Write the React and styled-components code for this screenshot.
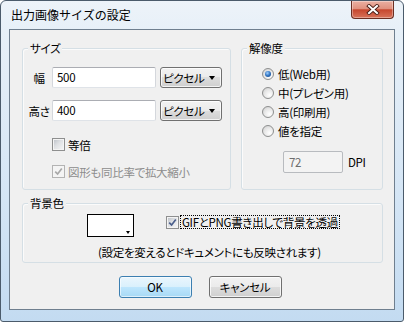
import React from "react";
import styled, { createGlobalStyle } from "styled-components";

const GlobalStyle = createGlobalStyle`
  html, body { margin: 0; padding: 0; background: #ffffff; }
  body {
    font-family: "Noto Sans CJK JP", "Noto Sans", sans-serif;
    font-size: 11.5px;
    letter-spacing: -0.3px;
    color: #000;
    font-feature-settings: "palt";
  }
  * { box-sizing: border-box; }
`;

const Window = styled.div`
  width: 404px;
  height: 322px;
  display: flex;
  flex-direction: column;
  border: 1px solid #4b5b6b;
  border-radius: 6px 6px 3px 3px;
  background: linear-gradient(180deg, #edf3f9 0px, #e7f0f8 30px, #d4e5f5 200px, #c3dbf1 322px);
  overflow: hidden;
`;

const TitleBar = styled.div`
  height: 28px;
  flex: none;
  display: flex;
  align-items: flex-start;
  justify-content: space-between;
`;

const Title = styled.div`
  padding: 7px 0 0 10px;
  font-size: 12px;
  letter-spacing: 0;
  line-height: 14px;
  font-feature-settings: normal;
`;

const CloseButton = styled.div`
  width: 43px;
  height: 18px;
  margin-right: 9px;
  border: 1px solid #6b2e22;
  border-top: none;
  border-radius: 0 0 4px 4px;
  background: linear-gradient(180deg, #ebb0a2 0%, #e0917f 45%, #c6472e 52%, #d8735a 100%);
  box-shadow: inset 0 0 0 1px rgba(255, 255, 255, 0.35);
  display: flex;
  align-items: center;
  justify-content: center;
`;

const Client = styled.div`
  flex: none;
  margin: 0 8px;
  height: 281px;
  border: 1px solid #6f7f8f;
  background: #f0f0f0;
  padding: 18px 11px 0 12px;
  display: flex;
  flex-direction: column;
`;

const TopRow = styled.div`
  display: grid;
  grid-template-columns: 209px 142px;
  column-gap: 10px;
  height: 142px;
`;

const Group = styled.div`
  position: relative;
  border: 1px solid #d5dfe5;
  border-radius: 3px;
  box-shadow: inset 1px 1px 0 #fbfbfb;
  padding: ${(p) => p.$pad};
  height: ${(p) => p.$h || "auto"};
  margin-top: ${(p) => p.$mt || "0"};
`;

const Legend = styled.span`
  position: absolute;
  top: -8px;
  left: 5px;
  padding: 0 2px;
  line-height: 14px;
  background: #f0f0f0;
`;

const FieldRow = styled.div`
  display: flex;
  align-items: center;
  height: 21px;
  & + & { margin-top: 12px; }
`;

const FieldLabel = styled.span`
  width: 26px;
  text-align: center;
  line-height: 14px;
`;

const TextBox = styled.div`
  width: 104px;
  height: 21px;
  margin-right: 4px;
  border: 1px solid;
  border-color: #abadb3 #d4d7dc #dfe3e8 #d4d7dc;
  border-radius: 2px;
  background: #fff;
  padding: 2px 0 0 4px;
  line-height: 14px;
`;

const Select = styled.div`
  width: 62px;
  height: 21px;
  border: 1px solid #707070;
  border-radius: 3px;
  background: linear-gradient(180deg, #f2f2f2 0%, #ebebeb 50%, #dddddd 50%, #cfcfcf 100%);
  box-shadow: inset 0 0 0 1px rgba(255, 255, 255, 0.75);
  display: flex;
  align-items: center;
  justify-content: space-between;
  padding: 0 6px 0 2px;
  line-height: 14px;
`;

const Arrow = styled.span`
  width: 0;
  height: 0;
  border-left: 3.5px solid transparent;
  border-right: 3.5px solid transparent;
  border-top: 4px solid #000;
`;

const CheckList = styled.div`
  display: flex;
  flex-direction: column;
  gap: 14px;
  margin-top: 17px;
  padding-left: 26px;
`;

const CheckRow = styled.div`
  display: flex;
  align-items: center;
  gap: 3px;
  height: 13px;
  line-height: 14px;
  color: ${(p) => (p.$disabled ? "#8d8d8d" : "#000")};
`;

const Box = styled.span`
  position: relative;
  flex: none;
  width: 13px;
  height: 13px;
  border: 1px solid ${(p) => (p.$disabled ? "#b3b3b3" : "#8e8f8f")};
  background: ${(p) =>
    p.$disabled
      ? "#f4f4f4"
      : "linear-gradient(135deg, #b9bec5 0%, #dfe1e4 45%, #f7f7f7 100%)"};
  box-shadow: inset 0 0 0 1px #f4f4f4;
  display: flex;
  align-items: center;
  justify-content: center;
`;

const RadioList = styled.div`
  display: flex;
  flex-direction: column;
  gap: 6px;
`;

const RadioRow = styled.div`
  display: flex;
  align-items: center;
  gap: 4px;
  height: 13px;
  line-height: 14px;
`;

const Radio = styled.span`
  position: relative;
  flex: none;
  width: 12px;
  height: 12px;
  border-radius: 50%;
  border: 1px solid #8e8f8f;
  background: radial-gradient(circle at 65% 70%, #ffffff 0%, #e6e6e6 55%, #c9c9c9 100%);
  &::after {
    content: "";
    display: ${(p) => (p.$on ? "block" : "none")};
    position: absolute;
    left: 2px;
    top: 2px;
    width: 6px;
    height: 6px;
    border-radius: 50%;
    background: radial-gradient(circle at 40% 35%, #9fd0ff 0%, #2f72c0 50%, #123f7a 100%);
  }
`;

const DpiRow = styled.div`
  display: flex;
  align-items: center;
  gap: 5px;
  margin: 14px 0 0 21px;
`;

const DpiBox = styled.div`
  width: 60px;
  height: 22px;
  border: 1px solid #b8bbbf;
  border-radius: 2px;
  background: #f3f3f3;
  color: #6d6d6d;
  padding: 3px 0 0 5px;
  line-height: 14px;
`;

const Unit = styled.span`
  line-height: 14px;
`;

const ColorRow = styled.div`
  display: flex;
  align-items: flex-start;
`;

const Swatch = styled.div`
  position: relative;
  width: 47px;
  height: 23px;
  border: 1px solid #000;
  background: #fff;
  &::after {
    content: "";
    position: absolute;
    right: 3px;
    bottom: 2px;
    border-left: 2px solid transparent;
    border-right: 2px solid transparent;
    border-top: 3px solid #000;
  }
`;

const TransparentCheck = styled.div`
  display: flex;
  align-items: center;
  margin: 1px 0 0 32px;
`;

const FocusLabel = styled.span`
  margin-left: 1px;
  padding: 0 1px;
  border: 1px dotted #000;
  line-height: 12px;
`;

const Note = styled.div`
  margin: 8px 0 0 11px;
  line-height: 14px;
`;

const ButtonRow = styled.div`
  display: flex;
  justify-content: center;
  gap: 17px;
  margin-top: 13px;
  padding-right: 5px;
`;

const Button = styled.div`
  width: 73px;
  height: 22px;
  border: 1px solid ${(p) => (p.$default ? "#3c7fb1" : "#707070")};
  border-radius: 3px;
  background: ${(p) =>
    p.$default
      ? "linear-gradient(180deg, #eaf6fd 0%, #d9f0fc 50%, #bee6fd 50%, #a7d9f5 100%)"
      : "linear-gradient(180deg, #f2f2f2 0%, #ebebeb 50%, #dddddd 50%, #cfcfcf 100%)"};
  box-shadow: inset 0 0 0 1px ${(p) => (p.$default ? "rgba(255,255,255,0.6)" : "rgba(255,255,255,0.75)")};
  display: flex;
  align-items: center;
  justify-content: center;
  line-height: 14px;
`;

const Check = ({ color }) => (
  <svg width="9" height="9" viewBox="0 0 9 9">
    <path d="M1.2 4.6 L3.6 7 L7.8 1.6" fill="none" stroke={color} strokeWidth="1.7" />
  </svg>
);

const CloseX = () => (
  <svg width="14" height="11" viewBox="0 0 14 11">
    <path d="M3 2 L11 9 M11 2 L3 9" stroke="#4a1e16" strokeWidth="3.8" strokeLinecap="square" />
    <path d="M3 2 L11 9 M11 2 L3 9" stroke="#ffffff" strokeWidth="2" strokeLinecap="square" />
  </svg>
);

export default function App() {
  return (
    <>
      <GlobalStyle />
      <Window>
        <TitleBar>
          <Title>出力画像サイズの設定</Title>
          <CloseButton>
            <CloseX />
          </CloseButton>
        </TitleBar>
        <Client>
          <TopRow>
            <Group $pad="18px 0 0 3px">
              <Legend>サイズ</Legend>
              <FieldRow>
                <FieldLabel>幅</FieldLabel>
                <TextBox>500</TextBox>
                <Select>
                  <span>ピクセル</span>
                  <Arrow />
                </Select>
              </FieldRow>
              <FieldRow>
                <FieldLabel>高さ</FieldLabel>
                <TextBox>400</TextBox>
                <Select>
                  <span>ピクセル</span>
                  <Arrow />
                </Select>
              </FieldRow>
              <CheckList>
                <CheckRow>
                  <Box />
                  <span>等倍</span>
                </CheckRow>
                <CheckRow $disabled>
                  <Box $disabled>
                    <Check color="#a8a8a8" />
                  </Box>
                  <span>図形も同比率で拡大縮小</span>
                </CheckRow>
              </CheckList>
            </Group>
            <Group $pad="18px 0 0 20px">
              <Legend>解像度</Legend>
              <RadioList>
                <RadioRow>
                  <Radio $on />
                  <span>低(Web用)</span>
                </RadioRow>
                <RadioRow>
                  <Radio />
                  <span>中(プレゼン用)</span>
                </RadioRow>
                <RadioRow>
                  <Radio />
                  <span>高(印刷用)</span>
                </RadioRow>
                <RadioRow>
                  <Radio />
                  <span>値を指定</span>
                </RadioRow>
              </RadioList>
              <DpiRow>
                <DpiBox>72</DpiBox>
                <Unit>DPI</Unit>
              </DpiRow>
            </Group>
          </TopRow>
          <Group $pad="10px 0 0 64px" $h="60px" $mt="13px">
            <Legend>背景色</Legend>
            <ColorRow>
              <Swatch />
              <TransparentCheck>
                <Box>
                  <Check color="#4b5f8c" />
                </Box>
                <FocusLabel>GIFとPNG書き出しで背景を透過</FocusLabel>
              </TransparentCheck>
            </ColorRow>
            <Note>(設定を変えるとドキュメントにも反映されます)</Note>
          </Group>
          <ButtonRow>
            <Button $default>OK</Button>
            <Button>キャンセル</Button>
          </ButtonRow>
        </Client>
      </Window>
    </>
  );
}
